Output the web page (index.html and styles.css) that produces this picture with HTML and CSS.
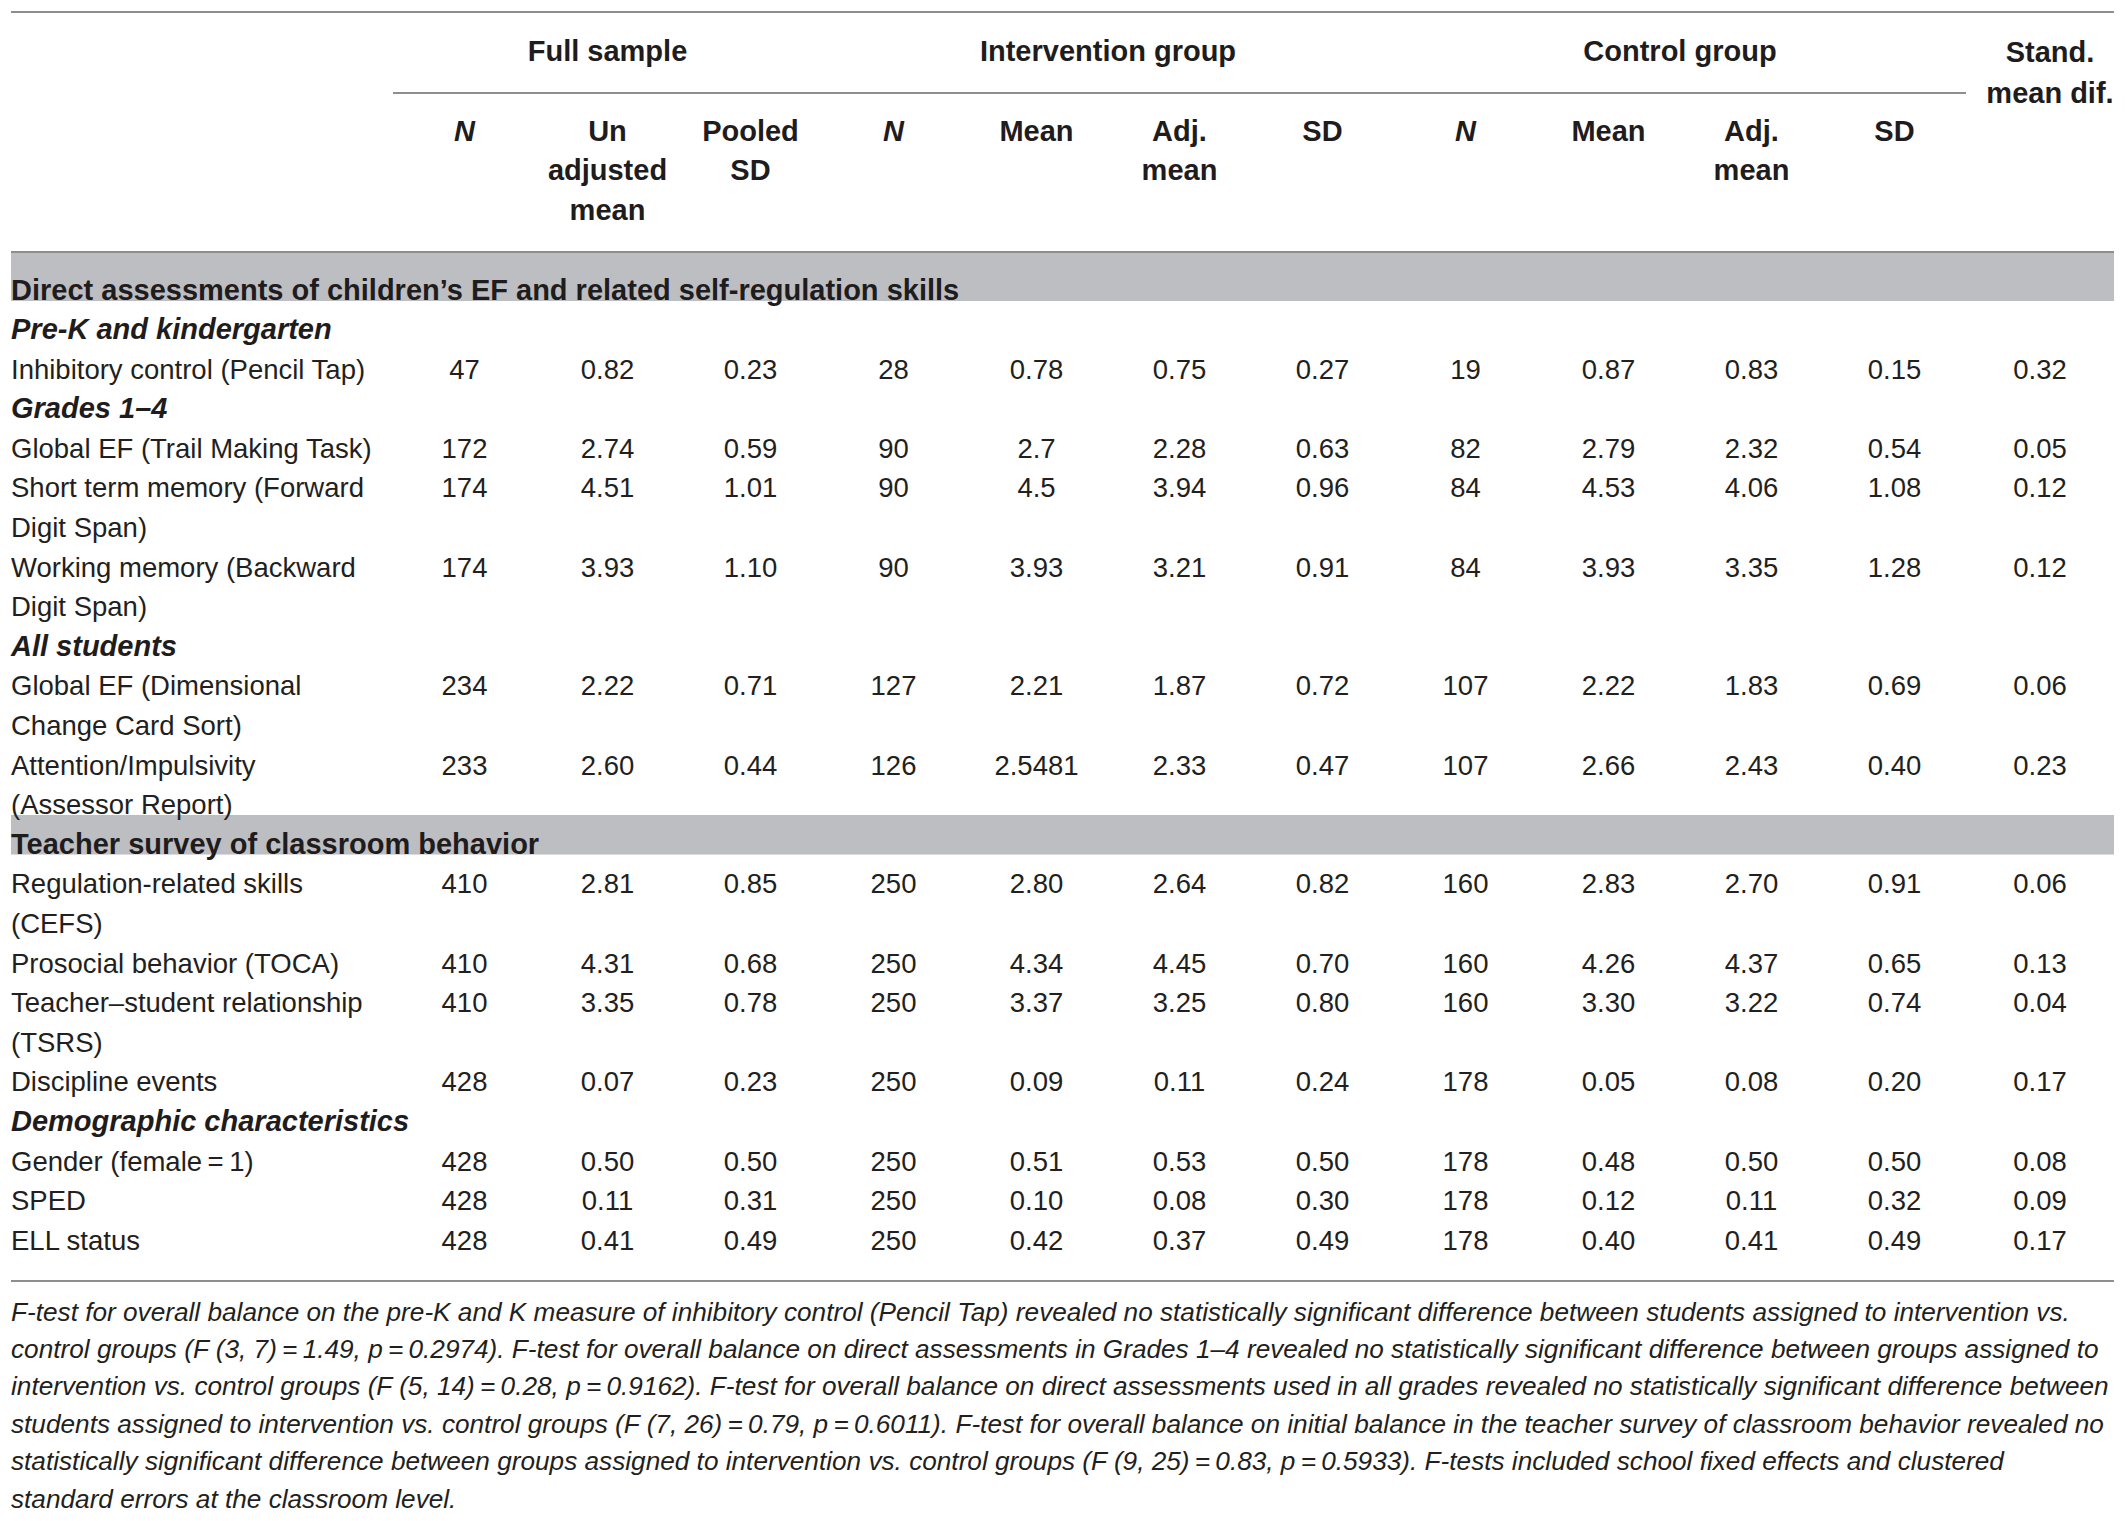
FILE: index.html
```html
<!DOCTYPE html>
<html lang="en">
<head>
<meta charset="utf-8">
<title>Baseline equivalence table</title>
<link rel="stylesheet" href="styles.css">
</head>
<body>
<div class="page">
  <div class="tbl">
    <div class="head">
      <div class="corner"></div>
      <div class="grp g-full">Full sample</div>
      <div class="grp g-int">Intervention group</div>
      <div class="grp g-ctl">Control group</div>
      <div class="stand">Stand.<br>mean dif.</div>
      <div class="sub"><i>N</i></div>
      <div class="sub">Un<br>adjusted<br>mean</div>
      <div class="sub">Pooled<br>SD</div>
      <div class="sub"><i>N</i></div>
      <div class="sub">Mean</div>
      <div class="sub">Adj.<br>mean</div>
      <div class="sub">SD</div>
      <div class="sub"><i>N</i></div>
      <div class="sub">Mean</div>
      <div class="sub">Adj.<br>mean</div>
      <div class="sub">SD</div>
    </div>

    <div class="body">
      <div class="sec sec-top">Direct assessments of children’s EF and related self-regulation skills</div>
      <div class="subsec">Pre-K and kindergarten</div>
      <div class="row"><div class="lbl">Inhibitory control (Pencil Tap)</div><div>47</div><div>0.82</div><div>0.23</div><div>28</div><div>0.78</div><div>0.75</div><div>0.27</div><div>19</div><div>0.87</div><div>0.83</div><div>0.15</div><div>0.32</div></div>
      <div class="subsec">Grades 1–4</div>
      <div class="row"><div class="lbl">Global EF (Trail Making Task)</div><div>172</div><div>2.74</div><div>0.59</div><div>90</div><div>2.7</div><div>2.28</div><div>0.63</div><div>82</div><div>2.79</div><div>2.32</div><div>0.54</div><div>0.05</div></div>
      <div class="row"><div class="lbl">Short term memory (Forward Digit Span)</div><div>174</div><div>4.51</div><div>1.01</div><div>90</div><div>4.5</div><div>3.94</div><div>0.96</div><div>84</div><div>4.53</div><div>4.06</div><div>1.08</div><div>0.12</div></div>
      <div class="row"><div class="lbl">Working memory (Backward Digit Span)</div><div>174</div><div>3.93</div><div>1.10</div><div>90</div><div>3.93</div><div>3.21</div><div>0.91</div><div>84</div><div>3.93</div><div>3.35</div><div>1.28</div><div>0.12</div></div>
      <div class="subsec">All students</div>
      <div class="row"><div class="lbl">Global EF (Dimensional Change Card Sort)</div><div>234</div><div>2.22</div><div>0.71</div><div>127</div><div>2.21</div><div>1.87</div><div>0.72</div><div>107</div><div>2.22</div><div>1.83</div><div>0.69</div><div>0.06</div></div>
      <div class="row"><div class="lbl">Attention/Impulsivity (Assessor Report)</div><div>233</div><div>2.60</div><div>0.44</div><div>126</div><div>2.5481</div><div>2.33</div><div>0.47</div><div>107</div><div>2.66</div><div>2.43</div><div>0.40</div><div>0.23</div></div>

      <div class="sec sec-mid">Teacher survey of classroom behavior</div>
      <div class="row"><div class="lbl">Regulation-related skills (CEFS)</div><div>410</div><div>2.81</div><div>0.85</div><div>250</div><div>2.80</div><div>2.64</div><div>0.82</div><div>160</div><div>2.83</div><div>2.70</div><div>0.91</div><div>0.06</div></div>
      <div class="row"><div class="lbl">Prosocial behavior (TOCA)</div><div>410</div><div>4.31</div><div>0.68</div><div>250</div><div>4.34</div><div>4.45</div><div>0.70</div><div>160</div><div>4.26</div><div>4.37</div><div>0.65</div><div>0.13</div></div>
      <div class="row"><div class="lbl">Teacher–student relationship (TSRS)</div><div>410</div><div>3.35</div><div>0.78</div><div>250</div><div>3.37</div><div>3.25</div><div>0.80</div><div>160</div><div>3.30</div><div>3.22</div><div>0.74</div><div>0.04</div></div>
      <div class="row"><div class="lbl">Discipline events</div><div>428</div><div>0.07</div><div>0.23</div><div>250</div><div>0.09</div><div>0.11</div><div>0.24</div><div>178</div><div>0.05</div><div>0.08</div><div>0.20</div><div>0.17</div></div>
      <div class="subsec">Demographic characteristics</div>
      <div class="row"><div class="lbl">Gender (female&thinsp;=&thinsp;1)</div><div>428</div><div>0.50</div><div>0.50</div><div>250</div><div>0.51</div><div>0.53</div><div>0.50</div><div>178</div><div>0.48</div><div>0.50</div><div>0.50</div><div>0.08</div></div>
      <div class="row"><div class="lbl">SPED</div><div>428</div><div>0.11</div><div>0.31</div><div>250</div><div>0.10</div><div>0.08</div><div>0.30</div><div>178</div><div>0.12</div><div>0.11</div><div>0.32</div><div>0.09</div></div>
      <div class="row"><div class="lbl">ELL status</div><div>428</div><div>0.41</div><div>0.49</div><div>250</div><div>0.42</div><div>0.37</div><div>0.49</div><div>178</div><div>0.40</div><div>0.41</div><div>0.49</div><div>0.17</div></div>
    </div>
  </div>

  <p class="note">F-test for overall balance on the pre-K and K measure of inhibitory control (Pencil Tap) revealed no statistically significant difference between students assigned to intervention vs.<br>control groups (F (3, 7)&thinsp;=&thinsp;1.49, p&thinsp;=&thinsp;0.2974). F-test for overall balance on direct assessments in Grades 1–4 revealed no statistically significant difference between groups assigned to<br>intervention vs. control groups (F (5, 14)&thinsp;=&thinsp;0.28, p&thinsp;=&thinsp;0.9162). F-test for overall balance on direct assessments used in all grades revealed no statistically significant difference between<br>students assigned to intervention vs. control groups (F (7, 26)&thinsp;=&thinsp;0.79, p&thinsp;=&thinsp;0.6011). F-test for overall balance on initial balance in the teacher survey of classroom behavior revealed no<br>statistically significant difference between groups assigned to intervention vs. control groups (F (9, 25)&thinsp;=&thinsp;0.83, p&thinsp;=&thinsp;0.5933). F-tests included school fixed effects and clustered<br>standard errors at the classroom level.</p>
</div>
</body>
</html>
```

FILE: styles.css
```css
html, body {
  margin: 0;
  padding: 0;
  background: #ffffff;
}

body {
  color: #231f20;
  font-family: "Liberation Sans", Arial, Helvetica, sans-serif;
}

.page {
  width: 2103px;
  padding: 11px 11px 0 11px;
}

.tbl {
  border-top: 2px solid #8e8e8e;
}

/* ---------- header ---------- */
.head {
  display: grid;
  grid-template-columns: 382px repeat(11, 143px) 148px;
  grid-template-rows: auto auto;
  font-weight: bold;
  font-size: 29px;
  line-height: 39.4px;
  text-align: center;
  color: #1f1c1d;
}

.corner {
  grid-column: 1;
  grid-row: 1 / span 2;
}

.grp {
  grid-row: 1;
  padding: 19px 0 20.6px;
  border-bottom: 2px solid #8e8e8e;
}

.g-full { grid-column: 2 / span 3; }
.g-int  { grid-column: 5 / span 4; }
.g-ctl  { grid-column: 9 / span 4; }

.stand {
  grid-column: 13;
  grid-row: 1 / span 2;
  padding: 19px 0 0 20px;
  line-height: 40.5px;
  white-space: nowrap;
}

.sub {
  grid-row: 2;
  padding: 17.7px 0 20.6px;
}

/* ---------- body ---------- */
.body {
  font-size: 27.5px;
  line-height: 39.6px;
  padding-bottom: 20px;
  border-bottom: 2px solid #8e8e8e;
}

.sec {
  box-sizing: border-box;
  background: #bdbec2;
  font-weight: bold;
  font-size: 29px;
  color: #1f1c1d;
  white-space: nowrap;
}

.sec-top {
  height: 50px;
  padding-top: 18px;
  border-top: 2px solid #8e8e8e;
  margin-bottom: 9.6px;
}

.sec-mid {
  height: 40px;
  margin-top: -9.4px;
  padding-top: 9.4px;
  margin-bottom: 9px;
  border-bottom: 1px solid #dcdcde;
}

.subsec {
  font-weight: bold;
  font-style: italic;
  font-size: 29px;
  color: #1f1c1d;
}

.row {
  display: grid;
  grid-template-columns: 382px repeat(11, 143px) 148px;
  text-align: center;
}

.row .lbl {
  text-align: left;
  padding-right: 8px;
}

/* ---------- footnote ---------- */
.note {
  margin: 11.3px 0 0;
  font-style: italic;
  font-size: 26.2px;
  line-height: 37.4px;
  white-space: nowrap;
}
```
